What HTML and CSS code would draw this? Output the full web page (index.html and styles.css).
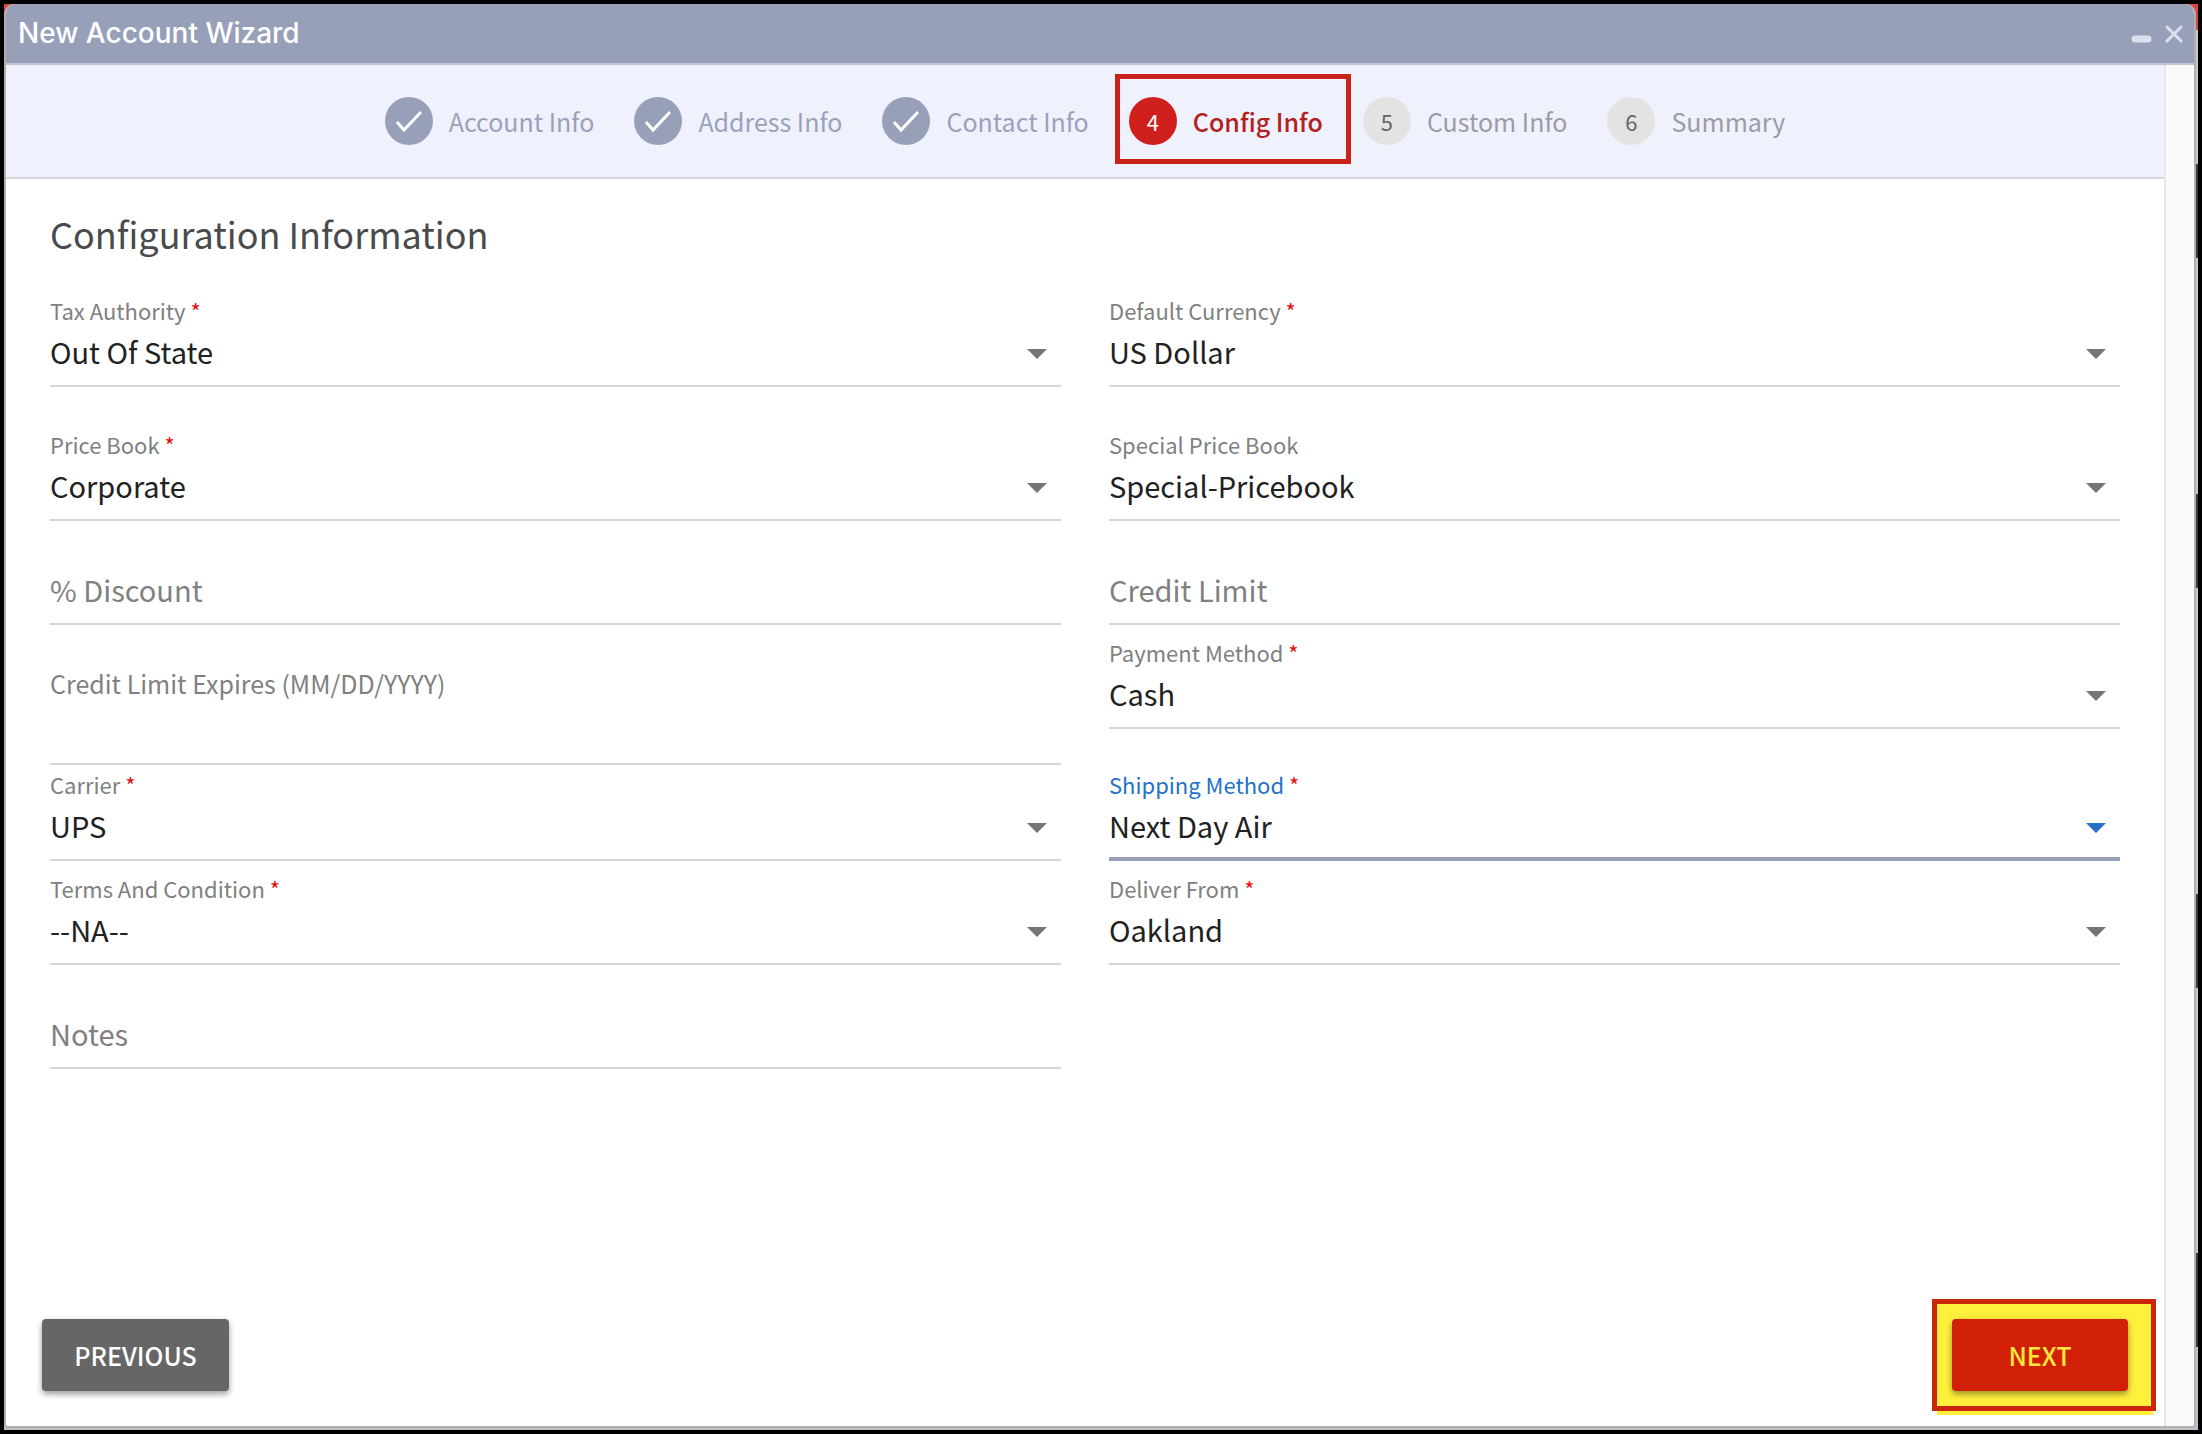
FILE: index.html
```html
<!DOCTYPE html>
<html lang="en">
<head>
    <meta charset="UTF-8">
    <title>New Account Wizard</title>
    <link rel="stylesheet" href="styles.css">
</head>
<body>
<div class="backdrop">
<div class="window">
    <div class="title-bar">
        <h1>New Account Wizard</h1>
        <div class="window-tools">
            <button type="button" class="tool" aria-label="Minimize">
                <svg width="24" height="24" viewBox="0 0 24 24"><path d="M5 17h13" stroke-width="7"/></svg>
            </button>
            <button type="button" class="tool" aria-label="Close">
                <svg width="24" height="24" viewBox="0 0 24 24"><path d="M5 5l14 14M19 5L5 19" stroke-width="3"/></svg>
            </button>
        </div>
    </div>

    <div class="window-body">
        <div class="content">
            <ol class="steps">
                <li class="done">
                    <span class="circle"><svg width="28" height="28" viewBox="0 0 28 28"><path d="M2 15l7 8L26 5"/></svg></span>
                    <span>Account Info</span>
                </li>
                <li class="done">
                    <span class="circle"><svg width="28" height="28" viewBox="0 0 28 28"><path d="M2 15l7 8L26 5"/></svg></span>
                    <span>Address Info</span>
                </li>
                <li class="done">
                    <span class="circle"><svg width="28" height="28" viewBox="0 0 28 28"><path d="M2 15l7 8L26 5"/></svg></span>
                    <span>Contact Info</span>
                </li>
                <li class="active"><span class="circle">4</span><span>Config Info</span></li>
                <li><span class="circle">5</span><span>Custom Info</span></li>
                <li><span class="circle">6</span><span>Summary</span></li>
            </ol>

            <form class="form">
                <h2>Configuration Information</h2>

                <div class="row">
                    <div class="field select">
                        <label for="tax">Tax Authority <b>*</b></label>
                        <select id="tax"><option>Out Of State</option></select>
                    </div>
                    <div class="field select">
                        <label for="currency">Default Currency <b>*</b></label>
                        <select id="currency"><option>US Dollar</option></select>
                    </div>
                </div>

                <div class="row spaced">
                    <div class="field select">
                        <label for="book">Price Book <b>*</b></label>
                        <select id="book"><option>Corporate</option></select>
                    </div>
                    <div class="field select">
                        <label for="special">Special Price Book</label>
                        <select id="special"><option>Special-Pricebook</option></select>
                    </div>
                </div>

                <div class="row">
                    <div class="field text">
                        <input type="text" id="discount" placeholder="% Discount" aria-label="% Discount">
                    </div>
                    <div class="field text">
                        <input type="text" id="limit" placeholder="Credit Limit" aria-label="Credit Limit">
                    </div>
                </div>

                <div class="row">
                    <div class="field date">
                        <label for="expires">Credit Limit Expires (MM/DD/YYYY)</label>
                        <input type="text" id="expires">
                    </div>
                    <div class="field select">
                        <label for="payment">Payment Method <b>*</b></label>
                        <select id="payment"><option>Cash</option></select>
                    </div>
                </div>

                <div class="row tight">
                    <div class="field select">
                        <label for="carrier">Carrier <b>*</b></label>
                        <select id="carrier"><option>UPS</option></select>
                    </div>
                    <div class="field select focused">
                        <label for="shipping">Shipping Method <b>*</b></label>
                        <select id="shipping"><option>Next Day Air</option></select>
                    </div>
                </div>

                <div class="row">
                    <div class="field select">
                        <label for="terms">Terms And Condition <b>*</b></label>
                        <select id="terms"><option>--NA--</option></select>
                    </div>
                    <div class="field select">
                        <label for="deliver">Deliver From <b>*</b></label>
                        <select id="deliver"><option>Oakland</option></select>
                    </div>
                </div>

                <div class="row">
                    <div class="field text">
                        <input type="text" id="notes" placeholder="Notes" aria-label="Notes">
                    </div>
                    <div class="field"></div>
                </div>
            </form>

            <div class="actions">
                <button type="button" class="btn previous">PREVIOUS</button>
                <div class="highlight">
                    <button type="button" class="btn next">NEXT</button>
                </div>
            </div>
        </div>
        <div class="scroll-track"></div>
    </div>
</div>
</div>
</body>
</html>
```

FILE: styles.css
```css
*{
    margin: 0;
    padding: 0;
    box-sizing: border-box;
}
body{
    display: flex;
    min-height: 100vh;
    padding: 4px;
    background: #000;
    font-family: "Noto Sans CJK SC", "Open Sans", sans-serif;
    font-size: 25px;
    color: #212121;
}
ol{
    list-style: none;
}
button, select, input{
    font: inherit;
    color: inherit;
    border: 0;
    background: none;
}

/* the page behind the window, only its edge shows */
.backdrop{
    flex: 1;
    display: flex;
    padding: 0 2px 2px 0;
    background: linear-gradient(#d9483f 26px, #c8c8c8 26px, #c8c8c8 160px, #3a3b40 160px, #3a3b40 254px, #c8c8c8 254px, #c8c8c8 490px, #3a3b40 490px, #3a3b40 584px, #c8c8c8 584px, #c8c8c8 890px, #3a3b40 890px, #3a3b40 984px, #c8c8c8 984px, #c8c8c8 1249px, #3a3b40 1249px, #3a3b40 1343px, #c0c1c8 1343px);
}
.window{
    flex: 1;
    display: flex;
    flex-direction: column;
    border: 2px solid #b0b0b0;
    border-top-width: 0;
    border-radius: 10px 10px 4px 4px;
    background: #fff;
    overflow: hidden;
}

/* title bar */
.title-bar{
    display: flex;
    justify-content: space-between;
    align-items: center;
    height: 61px;
    padding: 0 8px 0 12px;
    background: #989fb9;
    border-bottom: 2px solid #c0c2cf;
}
.title-bar h1{
    font: 500 28px/40px Inter, sans-serif;
    color: #fff;
    padding-bottom: 2px;
}
.window-tools{
    display: flex;
    gap: 8px;
}
.tool{
    height: 24px;
    cursor: pointer;
}
.tool svg{
    display: block;
    fill: none;
    stroke: #dde1ee;
    stroke-linecap: round;
}

.window-body{
    flex: 1;
    display: flex;
}
.content{
    flex: 1;
    display: flex;
    flex-direction: column;
}
.scroll-track{
    width: 30px;
    background: #fafafa;
    border-left: 2px solid #e8e8e8;
}

/* steps */
.steps{
    display: flex;
    justify-content: center;
    align-items: center;
    gap: 40px;
    height: 114px;
    background: #eff1fd;
    border-bottom: 2px solid #d5d5dd;
}
.steps li{
    position: relative;
    display: flex;
    align-items: center;
    gap: 16px;
    color: #9a9ca8;
}
.circle{
    display: flex;
    justify-content: center;
    align-items: center;
    width: 48px;
    height: 48px;
    border-radius: 50%;
    background: #e3e3e3;
    color: #666;
    font-size: 22px;
}
.circle svg{
    fill: none;
    stroke: #fff;
    stroke-width: 3;
}
.steps .done{
    color: #9aa1ba;
}
.done .circle{
    background: #989fb9;
}
.steps .active{
    color: #b3211f;
    font-weight: 500;
}
.active .circle{
    background: #d0201e;
    color: #fff;
    font-weight: 400;
}
.active::after{
    content: "";
    position: absolute;
    top: -23px;
    right: -28px;
    bottom: -19px;
    left: -14px;
    border: 5px solid #c9221a;
}

/* form */
.form{
    flex: 1;
    padding: 24px 44px 0;
}
.form h2{
    font-size: 36px;
    line-height: 60px;
    font-weight: 400;
    color: #4a4a4e;
    margin-bottom: 20px;
}
.row{
    display: flex;
    align-items: flex-start;
    gap: 48px;
    padding-top: 8px;
}
.spaced{
    padding-top: 38px;
}
.tight{
    padding-top: 0;
}
.field{
    position: relative;
    flex: 1;
    padding-top: 5px;
}
.field label{
    display: block;
    font-size: 22px;
    line-height: 28px;
    color: #808080;
}
.field b{
    color: #e60f0f;
    font-weight: 400;
}
.field select, .field input{
    display: block;
    width: 100%;
    height: 63px;
    padding: 6px 0 13px;
    border-bottom: 2px solid #d6d6d6;
    border-radius: 0;
    font-size: 29px;
    appearance: none;
    outline: none;
}
.field input::placeholder{
    color: #808080;
    opacity: 1;
}
.select::after{
    content: "";
    position: absolute;
    right: 14px;
    bottom: 28px;
    border: 10px solid transparent;
    border-top-color: #757575;
    border-bottom: 0;
    pointer-events: none;
}
.focused label{
    color: #2372c8;
}
.field.focused select{
    border-bottom: 4px solid #989fb9;
    padding-bottom: 11px;
}
.focused::after{
    border-top-color: #2372c8;
}
.text{
    padding-top: 33px;
}
.date{
    padding-top: 34px;
}
.date label{
    font-size: 25px;
    line-height: 32px;
    padding-bottom: 3px;
}

/* buttons */
.actions{
    display: flex;
    justify-content: space-between;
    align-items: center;
    padding: 0 8px 15px 36px;
}
.btn{
    display: block;
    height: 72px;
    border-radius: 4px;
    font-weight: 500;
    cursor: pointer;
    box-shadow: 0 3px 6px rgba(0, 0, 0, .4);
}
.previous{
    width: 187px;
    background: #666;
    color: #fff;
}
.next{
    width: 176px;
    background: #d11f08;
    color: #ffe93b;
}
.highlight{
    padding: 15px 23px 15px 15px;
    border: 5px solid #ca260b;
    background: #fff03c;
    box-shadow: 1px 8px 0 -4px #fff03c;
}
```
